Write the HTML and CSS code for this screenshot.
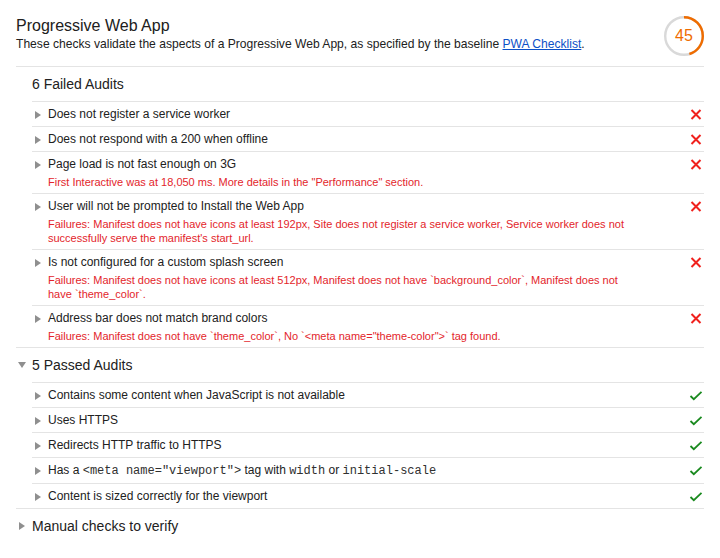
FILE: index.html
```html
<!DOCTYPE html>
<html lang="en">
<head>
<meta charset="utf-8">
<title>Progressive Web App</title>
<link rel="stylesheet" href="styles.css">
</head>
<body>
<div class="report">
  <header class="cat-header">
    <div class="cat-info">
      <h1 class="cat-title">Progressive Web App</h1>
      <p class="cat-desc">These checks validate the aspects of a Progressive Web App, as specified by the baseline <a href="#">PWA Checklist</a>.</p>
    </div>
    <div class="gauge">
      <svg class="gauge-svg" viewBox="0 0 40 40" width="40" height="40">
        <circle class="gauge-base" cx="20" cy="20" r="18.8"></circle>
        <circle class="gauge-arc" cx="20" cy="20" r="18.8" stroke-dasharray="53.2 118.2" transform="rotate(-90 20 20)"></circle>
      </svg>
      <span class="gauge-value">45</span>
    </div>
  </header>

  <section class="group">
    <div class="group-header"><span class="group-arrow"></span><span class="group-title">6 Failed Audits</span></div>
    <ul class="audits">
      <li class="audit">
        <span class="arrow"></span>
        <div class="audit-body"><div class="audit-title">Does not register a service worker</div></div>
        <span class="status"><svg viewBox="0 0 16 15" width="16" height="15"><path class="x" d="M3.5 3 L12.5 12 M12.5 3 L3.5 12"/></svg></span>
      </li>
      <li class="audit">
        <span class="arrow"></span>
        <div class="audit-body"><div class="audit-title">Does not respond with a 200 when offline</div></div>
        <span class="status"><svg viewBox="0 0 16 15" width="16" height="15"><path class="x" d="M3.5 3 L12.5 12 M12.5 3 L3.5 12"/></svg></span>
      </li>
      <li class="audit">
        <span class="arrow"></span>
        <div class="audit-body">
          <div class="audit-title">Page load is not fast enough on 3G</div>
          <div class="audit-desc">First Interactive was at 18,050 ms. More details in the "Performance" section.</div>
        </div>
        <span class="status"><svg viewBox="0 0 16 15" width="16" height="15"><path class="x" d="M3.5 3 L12.5 12 M12.5 3 L3.5 12"/></svg></span>
      </li>
      <li class="audit">
        <span class="arrow"></span>
        <div class="audit-body">
          <div class="audit-title">User will not be prompted to Install the Web App</div>
          <div class="audit-desc">Failures: Manifest does not have icons at least 192px, Site does not register a service worker, Service worker does not successfully serve the manifest's start_url.</div>
        </div>
        <span class="status"><svg viewBox="0 0 16 15" width="16" height="15"><path class="x" d="M3.5 3 L12.5 12 M12.5 3 L3.5 12"/></svg></span>
      </li>
      <li class="audit">
        <span class="arrow"></span>
        <div class="audit-body">
          <div class="audit-title">Is not configured for a custom splash screen</div>
          <div class="audit-desc">Failures: Manifest does not have icons at least 512px, Manifest does not have `background_color`, Manifest does not have `theme_color`.</div>
        </div>
        <span class="status"><svg viewBox="0 0 16 15" width="16" height="15"><path class="x" d="M3.5 3 L12.5 12 M12.5 3 L3.5 12"/></svg></span>
      </li>
      <li class="audit">
        <span class="arrow"></span>
        <div class="audit-body">
          <div class="audit-title">Address bar does not match brand colors</div>
          <div class="audit-desc">Failures: Manifest does not have `theme_color`, No `&lt;meta name="theme-color"&gt;` tag found.</div>
        </div>
        <span class="status"><svg viewBox="0 0 16 15" width="16" height="15"><path class="x" d="M3.5 3 L12.5 12 M12.5 3 L3.5 12"/></svg></span>
      </li>
    </ul>
  </section>

  <section class="group">
    <div class="group-header"><span class="group-arrow group-arrow--down"></span><span class="group-title">5 Passed Audits</span></div>
    <ul class="audits">
      <li class="audit">
        <span class="arrow"></span>
        <div class="audit-body"><div class="audit-title">Contains some content when JavaScript is not available</div></div>
        <span class="status"><svg viewBox="0 0 16 15" width="16" height="15"><path class="check" d="M2.5 8 L5.8 11.2 L13.5 3.8"/></svg></span>
      </li>
      <li class="audit">
        <span class="arrow"></span>
        <div class="audit-body"><div class="audit-title">Uses HTTPS</div></div>
        <span class="status"><svg viewBox="0 0 16 15" width="16" height="15"><path class="check" d="M2.5 8 L5.8 11.2 L13.5 3.8"/></svg></span>
      </li>
      <li class="audit">
        <span class="arrow"></span>
        <div class="audit-body"><div class="audit-title">Redirects HTTP traffic to HTTPS</div></div>
        <span class="status"><svg viewBox="0 0 16 15" width="16" height="15"><path class="check" d="M2.5 8 L5.8 11.2 L13.5 3.8"/></svg></span>
      </li>
      <li class="audit">
        <span class="arrow"></span>
        <div class="audit-body"><div class="audit-title">Has a <code>&lt;meta name="viewport"&gt;</code> tag with <code>width</code> or <code>initial-scale</code></div></div>
        <span class="status"><svg viewBox="0 0 16 15" width="16" height="15"><path class="check" d="M2.5 8 L5.8 11.2 L13.5 3.8"/></svg></span>
      </li>
      <li class="audit">
        <span class="arrow"></span>
        <div class="audit-body"><div class="audit-title">Content is sized correctly for the viewport</div></div>
        <span class="status"><svg viewBox="0 0 16 15" width="16" height="15"><path class="check" d="M2.5 8 L5.8 11.2 L13.5 3.8"/></svg></span>
      </li>
    </ul>
  </section>

  <section class="group group--plain">
    <div class="group-header"><span class="group-arrow"></span><span class="group-title">Manual checks to verify</span></div>
  </section>
</div>
</body>
</html>
```

FILE: styles.css
```css
* { box-sizing: border-box; }

html, body {
  margin: 0;
  padding: 0;
  background: #ffffff;
}

body {
  font-family: "Liberation Sans", Arial, Helvetica, sans-serif;
  color: #212121;
}

.report {
  padding: 0 16px;
}

/* Category header */
.cat-header {
  display: flex;
  align-items: flex-start;
  justify-content: space-between;
  padding: 16px 0 10px;
  border-bottom: 1px solid #e4e4e4;
}

.cat-title {
  margin: 0;
  font-size: 16px;
  line-height: 20px;
  font-weight: normal;
  color: #202020;
}

.cat-desc {
  margin: 0;
  font-size: 12.1px;
  line-height: 16px;
  color: #212121;
}

.cat-desc a {
  color: #0c50c7;
  text-decoration: underline;
}

.gauge {
  position: relative;
  width: 40px;
  height: 40px;
  flex: none;
}

.gauge-svg {
  display: block;
}

.gauge-base {
  fill: none;
  stroke: #d9d9d9;
  stroke-width: 2.4;
}

.gauge-arc {
  fill: none;
  stroke: #ef6c00;
  stroke-width: 2.4;
}

.gauge-value {
  position: absolute;
  left: 0;
  top: 0;
  width: 40px;
  height: 40px;
  display: flex;
  align-items: center;
  justify-content: center;
  font-size: 16px;
  color: #ef6c00;
}

/* Groups */
.group {
  border-bottom: 1px solid #e4e4e4;
}

.group--plain {
  border-bottom: none;
}

.group-header {
  display: flex;
  align-items: center;
  height: 34px;
}

.group-arrow {
  width: 16px;
  height: 14px;
  flex: none;
  position: relative;
}

.group-title {
  font-size: 14px;
  line-height: 18px;
  color: #212121;
}

.group--plain .group-arrow::before {
  content: "";
  position: absolute;
  left: 3px;
  top: 3px;
  border-left: 6px solid #8f8f8f;
  border-top: 4px solid transparent;
  border-bottom: 4px solid transparent;
}

.group-arrow--down::before {
  content: "";
  position: absolute;
  left: 2px;
  top: 4px;
  border-top: 6px solid #8f8f8f;
  border-left: 4px solid transparent;
  border-right: 4px solid transparent;
}

/* Audits */
.audits {
  list-style: none;
  margin: 0 0 0 16px;
  padding: 0;
  border-top: 1px solid #e4e4e4;
}

.audit {
  display: flex;
  align-items: flex-start;
  padding: 5px 0 4px;
  border-bottom: 1px solid #e4e4e4;
}

.audit:last-child {
  border-bottom: none;
}

.arrow {
  width: 16px;
  height: 15px;
  flex: none;
  position: relative;
}

.arrow::before {
  content: "";
  position: absolute;
  left: 3px;
  top: 3.5px;
  border-left: 6px solid #8f8f8f;
  border-top: 4px solid transparent;
  border-bottom: 4px solid transparent;
}

.audit-body {
  flex: 1;
  min-width: 0;
  padding-right: 48px;
}

.audit-title {
  font-size: 12px;
  line-height: 15px;
  color: #212121;
}

.audit-title code {
  font-family: "Liberation Mono", "Courier New", monospace;
  font-size: 12px;
  color: #303030;
}

.audit-desc {
  margin-top: 3px;
  font-size: 11px;
  line-height: 14px;
  color: #e3252b;
}

.status {
  width: 16px;
  height: 15px;
  flex: none;
}

.status svg {
  display: block;
}

.x {
  fill: none;
  stroke: #f0211d;
  stroke-width: 2;
}

.check {
  fill: none;
  stroke: #1a8a1f;
  stroke-width: 1.8;
}
```
